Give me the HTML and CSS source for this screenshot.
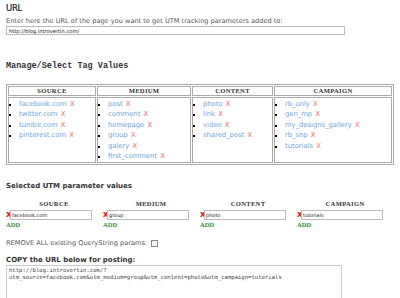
FILE: index.html
```html
<!DOCTYPE html>
<html>
<head>
<meta charset="utf-8">
<link rel="stylesheet" href="styles.css">
</head>
<body>
<div class="page">
  <h2 class="h-url">URL</h2>
  <p class="lead">Enter here the URL of the page you want to get UTM tracking parameters added to:</p>
  <input class="url-input" type="text" value="http://blog.introvertin.com/">

  <h3 class="h-mono">Manage/Select Tag Values</h3>

  <table class="tags">
    <thead>
      <tr>
        <th class="c1">SOURCE</th>
        <th class="c2">MEDIUM</th>
        <th class="c3">CONTENT</th>
        <th class="c4">CAMPAIGN</th>
      </tr>
    </thead>
    <tbody>
      <tr>
        <td><ul>
          <li><a>facebook.com</a> <span class="x">X</span></li>
          <li><a>twitter.com</a> <span class="x">X</span></li>
          <li><a>tumblr.com</a> <span class="x">X</span></li>
          <li><a>pinterest.com</a> <span class="x">X</span></li>
        </ul></td>
        <td><ul>
          <li><a>post</a> <span class="x">X</span></li>
          <li><a>comment</a> <span class="x">X</span></li>
          <li><a>homepage</a> <span class="x">X</span></li>
          <li><a>group</a> <span class="x">X</span></li>
          <li><a>galery</a> <span class="x">X</span></li>
          <li><a>first_comment</a> <span class="x">X</span></li>
        </ul></td>
        <td><ul>
          <li><a>photo</a> <span class="x">X</span></li>
          <li><a>link</a> <span class="x">X</span></li>
          <li><a>video</a> <span class="x">X</span></li>
          <li><a>shared_post</a> <span class="x">X</span></li>
        </ul></td>
        <td><ul>
          <li><a>rb_only</a> <span class="x">X</span></li>
          <li><a>gen_mp</a> <span class="x">X</span></li>
          <li><a>my_designs_gallery</a> <span class="x">X</span></li>
          <li><a>rb_snp</a> <span class="x">X</span></li>
          <li><a>tutorials</a> <span class="x">X</span></li>
        </ul></td>
      </tr>
    </tbody>
  </table>

  <h3 class="h-sel">Selected UTM parameter values</h3>

  <div class="fields">
    <div class="field">
      <div class="f-label">SOURCE</div>
      <div class="f-row"><span class="fx">X</span><input class="f-input" type="text" value="facebook.com"></div>
      <div class="add">ADD</div>
    </div>
    <div class="field">
      <div class="f-label">MEDIUM</div>
      <div class="f-row"><span class="fx">X</span><input class="f-input" type="text" value="group"></div>
      <div class="add">ADD</div>
    </div>
    <div class="field">
      <div class="f-label">CONTENT</div>
      <div class="f-row"><span class="fx">X</span><input class="f-input" type="text" value="photo"></div>
      <div class="add">ADD</div>
    </div>
    <div class="field">
      <div class="f-label">CAMPAIGN</div>
      <div class="f-row"><span class="fx">X</span><input class="f-input" type="text" value="tutorials"></div>
      <div class="add">ADD</div>
    </div>
  </div>

  <div class="remove">REMOVE ALL existing QueryString params: <span class="cb"></span></div>

  <div class="copy-title">COPY the URL below for posting:</div>
  <textarea class="out">http://blog.introvertin.com/?
utm_source=facebook.com&amp;utm_medium=group&amp;utm_content=photo&amp;utm_campaign=tutorials</textarea>
</div>
</body>
</html>
```

FILE: styles.css
```css
html, body {
  margin: 0;
  padding: 0;
  background: #fff;
}
.page {
  padding: 3px 6px 0 6px;
  font-family: "DejaVu Sans", Verdana, sans-serif;
  font-size: 6.6px;
  color: #555;
}
.h-url {
  margin: 0;
  font-size: 8.5px;
  font-weight: normal;
  color: #222;
  line-height: 10px;
  letter-spacing: -0.3px;
  -webkit-text-stroke: 0.2px #222;
}
.lead {
  margin: 4px 0 0 0;
  line-height: 8px;
}
.url-input {
  display: block;
  box-sizing: border-box;
  width: 339px;
  height: 9px;
  margin: 1px 0 0 0;
  padding: 0 2px;
  border: 1px solid #bbb;
  font-family: "DejaVu Sans", Verdana, sans-serif;
  font-size: 5.2px;
  color: #222;
  outline: none;
}
.h-mono {
  margin: 26px 0 0 0;
  font-family: "Liberation Mono", "DejaVu Sans Mono", monospace;
  font-size: 8.5px;
  font-weight: bold;
  color: #333;
  line-height: 10px;
}
.tags {
  margin-top: 13px;
  width: 388px;
  table-layout: fixed;
  border: 1px solid #aaa;
  border-spacing: 1px;
}
.tags th, .tags td {
  box-sizing: border-box;
  border: 1px solid #aaa;
  padding: 0;
}
.tags th {
  font-family: "Liberation Serif", "DejaVu Serif", serif;
  font-size: 6.6px;
  font-weight: bold;
  color: #333;
  letter-spacing: 0.3px;
  height: 10px;
  line-height: 8px;
}
.tags td {
  vertical-align: top;
}
.c1 { width: 88px; }
.c2 { width: 94px; }
.c3 { width: 81px; }
.tags ul {
  margin: 1px 0 1px 0;
  padding: 0 0 0 10px;
  list-style: square;
  color: #000;
}
.tags li {
  line-height: 10.4px;
  font-size: 6.8px;
}
.tags li::marker {
  font-size: 5px;
}
.tags a {
  color: #6aa5e0;
}
.x {
  color: #f26a6a;
  margin-left: 1px;
}
.h-sel {
  margin: 16px 0 0 0;
  font-size: 7px;
  font-weight: bold;
  color: #333;
  line-height: 10px;
}
.fields {
  display: flex;
  margin-top: 9px;
}
.field {
  width: 97px;
}
.f-label {
  width: 88px;
  margin-left: 4px;
  text-align: center;
  font-family: "Liberation Serif", "DejaVu Serif", serif;
  font-size: 6.6px;
  font-weight: bold;
  color: #333;
  letter-spacing: 0.3px;
  line-height: 8px;
}
.f-row {
  display: flex;
  align-items: center;
  margin-top: 2px;
}
.fx {
  color: #e00;
  font-weight: bold;
  font-size: 7px;
  width: 4px;
  line-height: 9px;
}
.f-input {
  box-sizing: border-box;
  width: 82px;
  height: 10px;
  margin: 0;
  padding: 0 1px;
  border: 1px solid #bbb;
  font-family: "DejaVu Sans", Verdana, sans-serif;
  font-size: 5px;
  color: #222;
  outline: none;
}
.add {
  margin-top: 1px;
  color: #2e8b2e;
  font-weight: bold;
  font-size: 6.5px;
  line-height: 8px;
  font-family: "Liberation Serif", "DejaVu Serif", serif;
}
.remove {
  margin-top: 10px;
  line-height: 9px;
  display: flex;
  align-items: center;
}
.cb {
  display: inline-block;
  width: 5px;
  height: 5px;
  border: 1px solid #888;
  margin-left: 4px;
  background: #f4f4f4;
}
.copy-title {
  margin-top: 8px;
  font-weight: bold;
  font-size: 7px;
  color: #333;
  line-height: 9px;
}
.out {
  display: block;
  box-sizing: border-box;
  width: 336px;
  height: 60px;
  margin: 0;
  padding: 1px 2px;
  border: 1px solid #ccc;
  font-family: "DejaVu Sans Mono", "Liberation Mono", monospace;
  font-size: 5.6px;
  line-height: 7px;
  color: #444;
  resize: none;
  outline: none;
}
```
